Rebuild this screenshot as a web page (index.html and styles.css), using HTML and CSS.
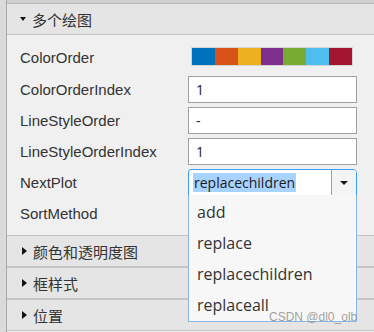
FILE: index.html
```html
<!DOCTYPE html>
<html lang="zh">
<head>
<meta charset="utf-8">
<link rel="stylesheet" href="styles.css">
</head>
<body>
<div class="app">
  <div class="sidebar"></div>
  <div class="main">
    <div class="topbar"></div>
    <div class="hdr open"><span class="tri-down"></span>多个绘图</div>
    <div class="panel">
      <div class="row first">
        <div class="label">ColorOrder</div>
        <div class="val"><div class="colorbar"><i class="c1"></i><i class="c2"></i><i class="c3"></i><i class="c4"></i><i class="c5"></i><i class="c6"></i><i class="c7"></i></div></div>
      </div>
      <div class="row">
        <div class="label">ColorOrderIndex</div>
        <div class="val"><div class="input">1</div></div>
      </div>
      <div class="row">
        <div class="label">LineStyleOrder</div>
        <div class="val"><div class="input">-</div></div>
      </div>
      <div class="row">
        <div class="label">LineStyleOrderIndex</div>
        <div class="val"><div class="input">1</div></div>
      </div>
      <div class="row">
        <div class="label">NextPlot</div>
        <div class="val">
          <div class="dd">
            <div class="dd-text"><span class="sel">replacechildren</span></div>
            <div class="dd-btn"><span class="arrow"></span></div>
            <ul class="popup">
              <li>add</li>
              <li>replace</li>
              <li>replacechildren</li>
              <li>replaceall</li>
            </ul>
          </div>
        </div>
      </div>
      <div class="row">
        <div class="label">SortMethod</div>
        <div class="val"></div>
      </div>
    </div>
    <div class="hdr closed"><span class="tri-right"></span>颜色和透明度图</div>
    <div class="hdr closed"><span class="tri-right"></span>框样式</div>
    <div class="hdr closed last"><span class="tri-right"></span>位置</div>
  </div>
  <div class="watermark">CSDN @dl0_olb</div>
</div>
</body>
</html>
```
FILE: styles.css
```css
html, body {
  margin: 0;
  padding: 0;
}
body {
  width: 374px;
  height: 332px;
  overflow: hidden;
  background: #e8e8e8;
  font-family: "Liberation Sans", Arial, sans-serif;
}
.app {
  position: relative;
  display: flex;
  height: 332px;
}
.sidebar {
  flex: none;
  width: 6px;
  background: #dadada;
  border-right: 1px solid #a9a9a9;
}
.main {
  flex: 1;
  min-width: 0;
  display: flex;
  flex-direction: column;
}
.topbar {
  height: 3px;
  background: #d0d0d0;
  border-bottom: 1px solid #b8b8b8;
}
.hdr {
  height: 30px;
  background: #e5e5e5;
  display: flex;
  align-items: center;
  padding-left: 13px;
  font-family: "Noto Sans CJK SC", sans-serif;
  font-size: 15px;
  color: #333;
}
.hdr.open {
  border-bottom: 1px solid #c2c2c2;
}
.hdr.closed {
  border-bottom: 2px solid #c6c6c6;
}
.hdr.closed.last {
  border-bottom: 1px solid #c6c6c6;
}
.tri-down {
  width: 0;
  height: 0;
  border-left: 3.5px solid transparent;
  border-right: 3.5px solid transparent;
  border-top: 4px solid #111;
  margin-right: 6px;
}
.tri-right {
  width: 0;
  height: 0;
  border-top: 4px solid transparent;
  border-bottom: 4px solid transparent;
  border-left: 5px solid #111;
  margin-left: 2px;
  margin-right: 6px;
}
.panel {
  background: #f0f0f0;
  padding: 6px 0 6px 13px;
  border-bottom: 1px solid #c2c2c2;
}
.row {
  display: grid;
  grid-template-columns: 168px 169px;
  height: 31px;
  align-items: center;
}
.row.first {
  height: 33px;
}
.label {
  font-size: 15px;
  color: #333;
  white-space: nowrap;
}
.val {
  position: relative;
}
.row.first .val {
  align-self: start;
  padding-top: 6px;
}
.colorbar {
  margin-left: 3px;
  width: 162px;
  height: 19px;
  box-sizing: border-box;
  border: 1px solid #d4d4d4;
  display: flex;
}
.colorbar i {
  flex: 1;
}
.c1 { background: #0072bd; }
.c2 { background: #d95319; }
.c3 { background: #edb120; }
.c4 { background: #7e2f8e; }
.c5 { background: #77ac30; }
.c6 { background: #4dbeee; }
.c7 { background: #a2142f; }
.input {
  height: 27px;
  box-sizing: border-box;
  border: 1px solid #a0a0a0;
  background: #fff;
  display: flex;
  align-items: center;
  padding-left: 7px;
  font-family: "Open Sans", sans-serif;
  font-size: 14px;
  color: #222;
}
.dd {
  position: relative;
  height: 27px;
  box-sizing: border-box;
  border: 1px solid #3d9cf5;
  border-radius: 3px 4px 0 0;
  background: #fff;
  display: flex;
}
.dd-text {
  flex: 1;
  display: flex;
  align-items: center;
  padding-left: 4px;
  font-family: "Open Sans", sans-serif;
  font-size: 14px;
  color: #1a1a1a;
}
.sel {
  background: #a9d3ff;
  line-height: 19px;
  padding: 0 1px;
}
.dd-btn {
  width: 25px;
  box-sizing: border-box;
  border-left: 1px solid #a0a0a0;
  background: #f4f4f4;
  border-top-right-radius: 3px;
  display: flex;
  align-items: center;
  justify-content: center;
}
.arrow {
  width: 0;
  height: 0;
  border-left: 4px solid transparent;
  border-right: 4px solid transparent;
  border-top: 4px solid #1a1a1a;
}
.popup {
  position: absolute;
  top: 25px;
  left: -1px;
  width: 169px;
  height: 127px;
  box-sizing: border-box;
  margin: 0;
  padding: 1px 0 0 0;
  list-style: none;
  border: 1px solid #88b6e6;
  border-top: none;
  background: #f7f7f7;
  z-index: 2;
}
.popup li {
  height: 31px;
  display: flex;
  align-items: center;
  padding-left: 8px;
  font-family: "Open Sans", sans-serif;
  font-size: 16px;
  color: #333;
}
.watermark {
  position: absolute;
  left: 269px;
  top: 310px;
  font-size: 12px;
  color: rgba(130, 130, 130, 0.75);
  z-index: 5;
}
```
